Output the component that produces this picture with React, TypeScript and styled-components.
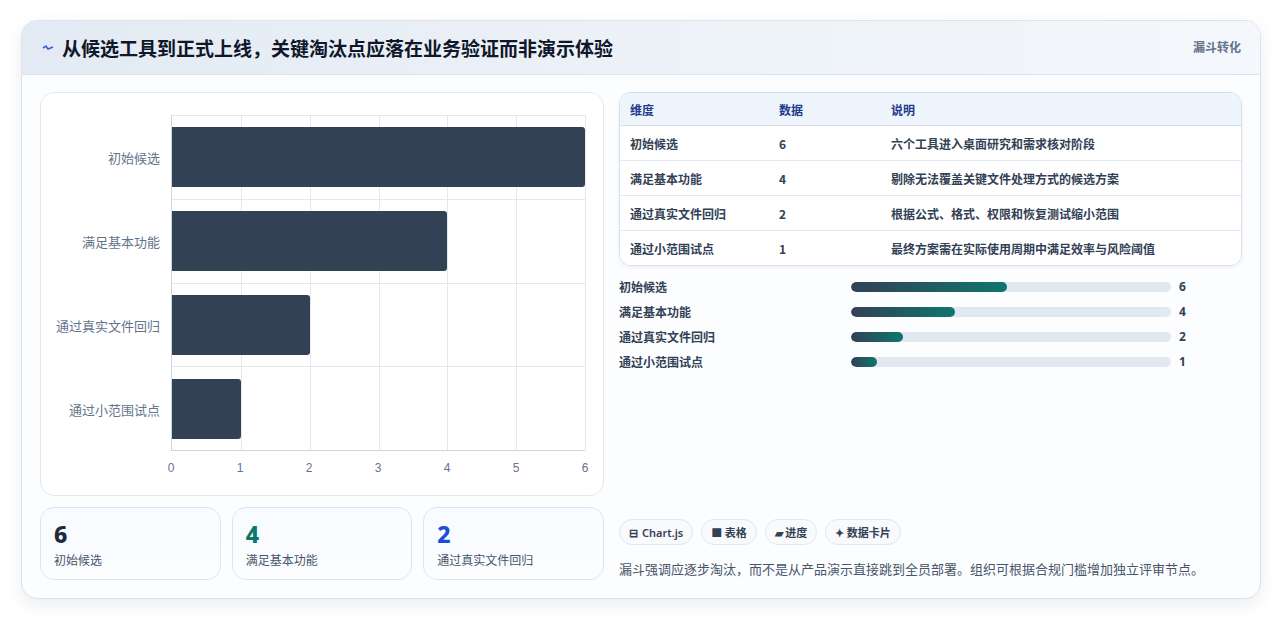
import React from 'react';
import styled, { createGlobalStyle } from 'styled-components';

const GlobalStyle = createGlobalStyle`
  html, body { margin: 0; padding: 0; background: #ffffff; }
  body { font-family: "Noto Sans CJK SC", "Noto Sans", sans-serif; color: #1e293b; }
`;

const Page = styled.div`
  padding: 20px 21px 20px 21px;
  box-sizing: border-box;
  height: 620px;
`;

const Card = styled.div`
  border: 1px solid #dbe3ee;
  border-radius: 16px;
  background: #fcfdff;
  box-shadow: 0 6px 18px rgba(15, 23, 42, 0.08);
  overflow: hidden;
  height: 579px;
  box-sizing: border-box;
  display: flex;
  flex-direction: column;
`;

const Header = styled.div`
  height: 55px;
  box-sizing: border-box;
  display: flex;
  align-items: center;
  justify-content: space-between;
  padding: 0 19px 0 20px;
  background: linear-gradient(90deg, #e4eaf3 0%, #eef3f8 60%, #f4f7fb 100%);
  border-bottom: 1px solid #d8e4ef;
`;

const Title = styled.h1`
  margin: 0;
  font-size: 19px;
  font-weight: 700;
  color: #0f172a;
  display: flex;
  align-items: center;
  gap: 8px;
`;

const Badge = styled.span`
  font-size: 12px;
  font-weight: 700;
  color: #64748b;
  align-self: flex-start;
  margin-top: 17px;
`;

const Body = styled.div`
  flex: 1;
  display: grid;
  grid-template-columns: 564px 1fr;
  gap: 15px;
  padding: 17px 18px 18px 18px;
`;

const LeftCol = styled.div`
  display: flex;
  flex-direction: column;
  gap: 11px;
`;

const ChartPanel = styled.div`
  height: 404px;
  box-sizing: border-box;
  border: 1px solid #e2e8f0;
  border-radius: 14px;
  background: #ffffff;
  padding: 22px 18px 14px 12px;
  display: grid;
  grid-template-columns: 118px 1fr;
  grid-template-rows: 1fr 30px;
`;

const CatLabels = styled.div`
  display: flex;
  flex-direction: column;
`;

const CatLabel = styled.div`
  flex: 1;
  display: flex;
  align-items: center;
  justify-content: flex-end;
  padding-right: 11px;
  font-size: 13px;
  color: #64748b;
`;

const Plot = styled.div`
  position: relative;
  border-left: 1px solid #cbd5e1;
  border-bottom: 1px solid #cbd5e1;
  display: flex;
  flex-direction: column;
`;

const GridLine = styled.div<{ $left: number }>`
  position: absolute;
  top: 0;
  bottom: 0;
  left: ${p => p.$left}%;
  width: 1px;
  background: #e5e7eb;
`;

const Band = styled.div`
  flex: 1;
  display: flex;
  align-items: center;
  border-top: 1px solid #e5e7eb;
  position: relative;
  &:first-child { border-top: none; }
`;

const Bar = styled.div`
  height: 60px;
  background: #334155;
  border-radius: 0 3px 3px 0;
  position: relative;
`;

const Ticks = styled.div`
  grid-column: 2;
  position: relative;
`;

const Tick = styled.span`
  position: absolute;
  top: 10px;
  transform: translateX(-50%);
  font-size: 12px;
  color: #64748b;
  font-family: "Liberation Sans", sans-serif;
`;

const Stats = styled.div`
  display: grid;
  grid-template-columns: repeat(3, 1fr);
  gap: 11px;
`;

const Stat = styled.div`
  height: 73px;
  box-sizing: border-box;
  border: 1px solid #dbe6f3;
  border-radius: 14px;
  background: linear-gradient(180deg, #f8fbff, #fbfdff);
  padding: 12px 13px;
`;

const StatValue = styled.div<{ $color: string }>`
  font-size: 23px;
  font-weight: 800;
  line-height: 28px;
  color: ${p => p.$color};
  font-family: "Noto Sans", sans-serif;
`;

const StatLabel = styled.div`
  font-size: 12px;
  color: #475569;
  margin-top: 3px;
`;

const RightCol = styled.div`
  display: flex;
  flex-direction: column;
`;

const Table = styled.table`
  width: 100%;
  border-collapse: separate;
  border-spacing: 0;
  border: 1px solid #d7e0ea;
  border-radius: 12px;
  overflow: hidden;
  font-size: 12px;
  box-shadow: 0 2px 4px rgba(15, 23, 42, 0.05);
  th, td {
    text-align: left;
    padding: 0 10px;
  }
  th {
    height: 32px;
    background: #eef5fd;
    color: #1e3a8a;
    font-weight: 700;
    border-bottom: 1px solid #d7e0ea;
  }
  td {
    height: 34px;
    color: #334155;
    font-weight: 600;
    border-bottom: 1px solid #e5eaf0;
    background: #ffffff;
  }
  tr:last-child td { border-bottom: none; }
`;

const Progress = styled.div`
  margin-top: 12px;
  display: flex;
  flex-direction: column;
  gap: 8px;
`;

const PRow = styled.div`
  display: grid;
  grid-template-columns: 232px 320px 1fr;
  align-items: center;
  gap: 0;
  height: 17px;
  font-size: 12px;
  font-weight: 600;
  color: #334155;
`;

const Track = styled.div`
  height: 10px;
  border-radius: 5px;
  background: #e2e8f0;
  overflow: hidden;
`;

const Fill = styled.div`
  height: 100%;
  border-radius: 5px;
  background: linear-gradient(90deg, #334155, #0f766e);
`;

const PVal = styled.span`
  padding-left: 8px;
  font-weight: 700;
  font-family: "Noto Sans", sans-serif;
`;

const Spacer = styled.div`
  flex: 1;
`;

const Tags = styled.div`
  display: flex;
  gap: 8px;
`;

const Tag = styled.span`
  height: 26px;
  box-sizing: border-box;
  padding: 0 9px;
  border: 1px solid #e2e8f0;
  border-radius: 13px;
  background: #f8fafc;
  display: flex;
  align-items: center;
  gap: 4px;
  font-size: 11px;
  font-weight: 600;
  color: #334155;
`;

const Note = styled.p`
  margin: 14px 0 2px;
  font-size: 13px;
  color: #475569;
`;

const rows = [
  { name: '初始候选', value: 6, desc: '六个工具进入桌面研究和需求核对阶段' },
  { name: '满足基本功能', value: 4, desc: '剔除无法覆盖关键文件处理方式的候选方案' },
  { name: '通过真实文件回归', value: 2, desc: '根据公式、格式、权限和恢复测试缩小范围' },
  { name: '通过小范围试点', value: 1, desc: '最终方案需在实际使用周期中满足效率与风险阈值' },
];

const statColors = ['#1e293b', '#0f766e', '#1d4ed8'];

export default function App() {
  return (
    <>
      <GlobalStyle />
      <Page>
        <Card>
          <Header>
            <Title>
              <svg width="12" height="12" viewBox="0 0 12 12">
                <path d="M1 6 L4 4 L6 7 L11 5" stroke="#3b5bdb" strokeWidth="1.6" fill="none" />
              </svg>
              从候选工具到正式上线，关键淘汰点应落在业务验证而非演示体验
            </Title>
            <Badge>漏斗转化</Badge>
          </Header>
          <Body>
            <LeftCol>
              <ChartPanel>
                <CatLabels>
                  {rows.map(r => <CatLabel key={r.name}>{r.name}</CatLabel>)}
                </CatLabels>
                <Plot>
                  {[1, 2, 3, 4, 5, 6].map(i => <GridLine key={i} $left={(i / 6) * 100} />)}
                  {rows.map(r => (
                    <Band key={r.name}>
                      <Bar style={{ width: `${(r.value / 6) * 100}%` }} />
                    </Band>
                  ))}
                </Plot>
                <Ticks>
                  {[0, 1, 2, 3, 4, 5, 6].map(i => <Tick key={i} style={{ left: `${(i / 6) * 100}%` }}>{i}</Tick>)}
                </Ticks>
              </ChartPanel>
              <Stats>
                {rows.slice(0, 3).map((r, i) => (
                  <Stat key={r.name}>
                    <StatValue $color={statColors[i]}>{r.value}</StatValue>
                    <StatLabel>{r.name}</StatLabel>
                  </Stat>
                ))}
              </Stats>
            </LeftCol>
            <RightCol>
              <Table>
                <thead>
                  <tr>
                    <th style={{ width: 129 }}>维度</th>
                    <th style={{ width: 92 }}>数据</th>
                    <th>说明</th>
                  </tr>
                </thead>
                <tbody>
                  {rows.map(r => (
                    <tr key={r.name}>
                      <td>{r.name}</td>
                      <td>{r.value}</td>
                      <td>{r.desc}</td>
                    </tr>
                  ))}
                </tbody>
              </Table>
              <Progress>
                {rows.map(r => (
                  <PRow key={r.name}>
                    <span>{r.name}</span>
                    <Track><Fill style={{ width: `${r.value * 8.1}%` }} /></Track>
                    <PVal>{r.value}</PVal>
                  </PRow>
                ))}
              </Progress>
              <Spacer />
              <Tags>
                <Tag>⊟ <span style={{ fontFamily: '"Noto Sans", sans-serif' }}>Chart.js</span></Tag>
                <Tag>■ 表格</Tag>
                <Tag>▰ 进度</Tag>
                <Tag>✦ 数据卡片</Tag>
              </Tags>
              <Note>漏斗强调应逐步淘汰，而不是从产品演示直接跳到全员部署。组织可根据合规门槛增加独立评审节点。</Note>
            </RightCol>
          </Body>
        </Card>
      </Page>
    </>
  );
}
